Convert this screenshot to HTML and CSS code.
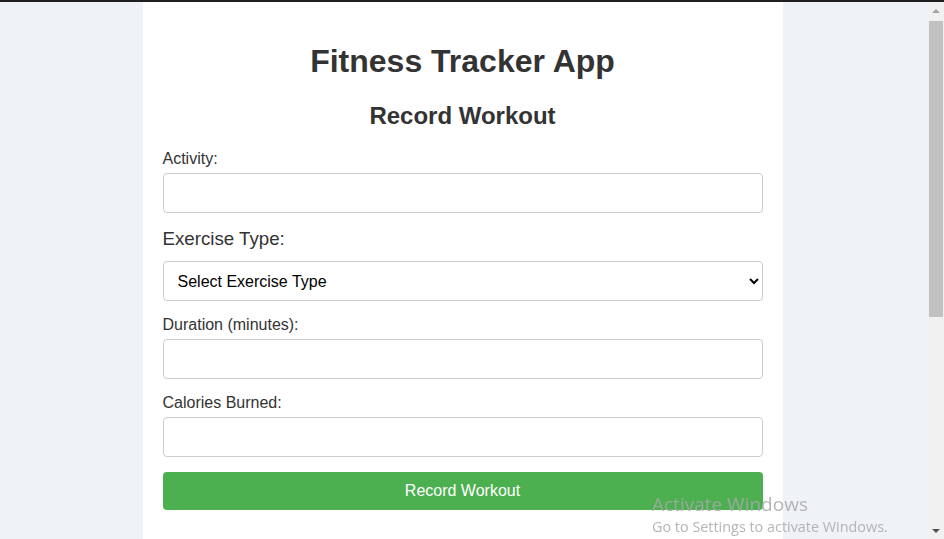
FILE: index.html
```html
<!DOCTYPE html>
<html lang="en">
<head>
<meta charset="utf-8">
<title>Fitness Tracker App</title>
<link rel="stylesheet" href="styles.css">
</head>
<body>
<div class="window">
  <main class="page">
    <div class="container">
      <h1 class="title">Fitness Tracker App</h1>
      <h2 class="subtitle">Record Workout</h2>
      <form class="form">
        <label class="label" for="activity">Activity:</label>
        <input class="field" id="activity" type="text">
        <label class="label label-large" for="type">Exercise Type:</label>
        <select class="field select" id="type">
          <option>Select Exercise Type</option>
        </select>
        <label class="label" for="duration">Duration (minutes):</label>
        <input class="field" id="duration" type="number">
        <label class="label" for="calories">Calories Burned:</label>
        <input class="field" id="calories" type="number">
        <button class="submit" type="button">Record Workout</button>
      </form>
      <ul class="history"></ul>
    </div>
  </main>
  <aside class="scrollbar">
    <div class="arrow arrow-up"></div>
    <div class="track"><div class="thumb"></div></div>
    <div class="arrow arrow-down"></div>
  </aside>
</div>
<div class="watermark">
  <div class="wm-title">Activate Windows</div>
  <div class="wm-sub">Go to Settings to activate Windows.</div>
</div>
</body>
</html>
```
FILE: styles.css
```css
html, body {
  margin: 0;
  padding: 0;
  height: 100%;
  overflow: hidden;
}
body {
  font-family: "Liberation Sans", Arial, sans-serif;
  color: #333;
  background: #eff2f7;
  border-top: 2px solid #1f1f1f;
  box-sizing: border-box;
}
.window {
  display: grid;
  grid-template-columns: 1fr 17px;
  height: 100%;
}
.page {
  overflow: hidden;
}
.container {
  width: 600px;
  margin: 0 auto;
  padding: 20px;
  background: #fff;
  min-height: 900px;
  position: relative;
  left: -1px;
}
.title {
  font-size: 32px;
  text-align: center;
  margin: 21px 0 22px;
}
.subtitle {
  font-size: 24px;
  text-align: center;
  margin: 20px 0;
}
.form {
  display: flex;
  flex-direction: column;
}
.label {
  display: block;
  font-size: 16px;
  margin-bottom: 5px;
}
.label-large {
  font-size: 18.72px;
  margin-bottom: 11px;
}
.field {
  box-sizing: border-box;
  width: 100%;
  height: 40px;
  padding: 10px;
  border: 1px solid #ccc;
  border-radius: 4px;
  font-family: "Liberation Sans", Arial, sans-serif;
  font-size: 16px;
  color: #000;
  background: #fff;
  margin: 0 0 15px;
}
.select {
  padding: 8px 10px;
}
.submit {
  height: 38px;
  width: 100%;
  border: none;
  border-radius: 4px;
  background: #4caf50;
  color: #fff;
  font-family: "Liberation Sans", Arial, sans-serif;
  font-size: 16px;
  padding: 10px;
}
.history {
  list-style: none;
  padding: 0;
}
.scrollbar {
  background: #f1f1f1;
  display: flex;
  flex-direction: column;
}
.arrow {
  height: 17px;
  display: flex;
  align-items: center;
  justify-content: center;
}
.arrow-up::before {
  content: "";
  border-left: 4px solid transparent;
  border-right: 4px solid transparent;
  border-bottom: 4px solid #a3a3a3;
}
.arrow-down::before {
  content: "";
  border-left: 4px solid transparent;
  border-right: 4px solid transparent;
  border-top: 4px solid #505050;
}
.track {
  flex: 1;
  padding: 2px 1px 0 2px;
}
.thumb {
  height: 296px;
  background: #c1c1c1;
}
.watermark {
  position: fixed;
  left: 652px;
  top: 491px;
  font-family: "Open Sans", "Noto Sans", sans-serif;
  color: rgba(168, 168, 168, 0.85);
}
.wm-title {
  font-size: 19px;
  line-height: 26px;
}
.wm-sub {
  font-size: 14.4px;
  line-height: 20px;
}
```
